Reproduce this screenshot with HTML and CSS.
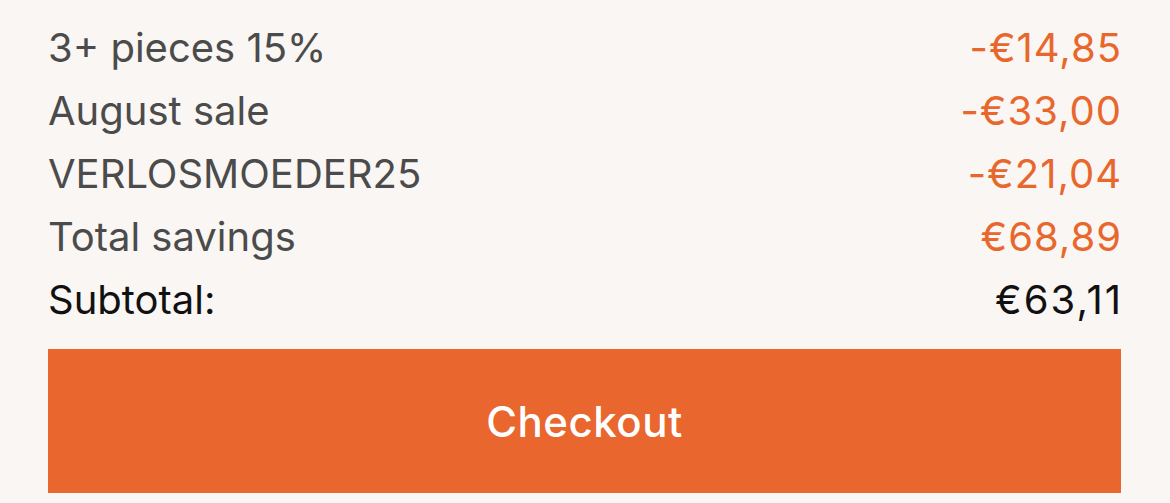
FILE: index.html
```html
<!DOCTYPE html>
<html lang="en">
<head>
    <meta charset="UTF-8">
    <meta name="viewport" content="width=device-width, initial-scale=1.0">
    <title>Cart summary</title>
    <link rel="stylesheet" href="styles.css">
</head>
<body>

    <!-- Discounts and subtotal -->
    <div class="summary">
        <div class="summary-row">
            <span class="label">3+ pieces 15%</span>
            <span class="discount">-€14,85</span>
        </div>
        <div class="summary-row">
            <span class="label">August sale</span>
            <span class="discount">-€33,00</span>
        </div>
        <div class="summary-row">
            <span class="label">VERLOSMOEDER25</span>
            <span class="discount">-€21,04</span>
        </div>
        <div class="summary-row">
            <span class="label">Total savings</span>
            <span class="discount">€68,89</span>
        </div>
        <div class="summary-row subtotal">
            <span>Subtotal:</span>
            <span class="amount">€63,11</span>
        </div>

        <button class="checkout-button">Checkout</button>
    </div>

</body>
</html>
```

FILE: styles.css
```css
html, body {
    margin: 0;
    padding: 0;
    background-color: #faf6f3;
    font-family: Inter, "Liberation Sans", sans-serif;
}

.summary {
    padding: 16px 49px 0 48px;
}

.summary-row {
    display: flex;
    justify-content: space-between;
    font-size: 40px;
    line-height: 63px;
}

.summary-row .label {
    color: #4b4b4b;
}

.summary-row .discount {
    color: #e8672d;
    letter-spacing: 1px;
    margin-right: -1px;
}

.subtotal {
    color: #111;
}

.subtotal .amount {
    letter-spacing: 2px;
    margin-right: -2px;
}

.checkout-button {
    display: block;
    width: 100%;
    height: 144px;
    margin-top: 18px;
    border: none;
    background-color: #e9672e;
    color: white;
    font-family: inherit;
    font-size: 42px;
    font-weight: 500;
    letter-spacing: 0.5px;
    cursor: pointer;
}
```
